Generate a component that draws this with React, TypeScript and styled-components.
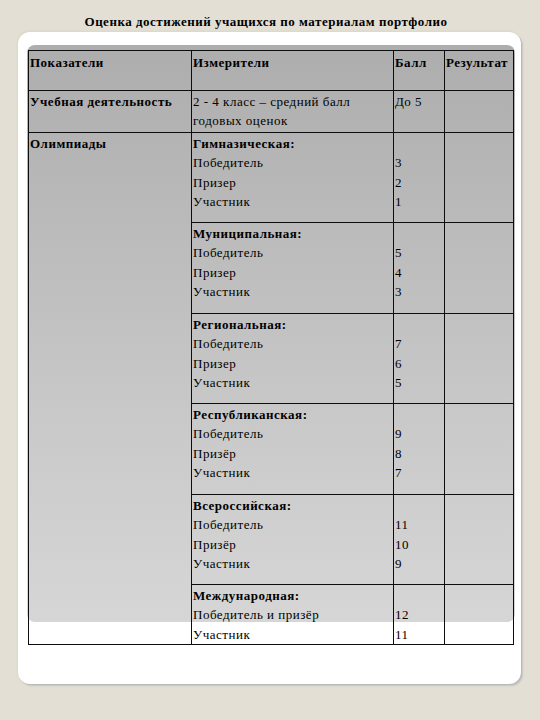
import React from "react";
import styled, { createGlobalStyle } from "styled-components";

const Global = createGlobalStyle`
  html, body { margin: 0; padding: 0; background: #e3dfd5; }
  body {
    width: 540px;
    height: 720px;
    overflow: hidden;
    font-family: "Liberation Serif", "Times New Roman", serif;
    color: #000;
  }
`;

const Page = styled.div`
  display: flex;
  flex-direction: column;
  padding-top: 14px;
`;

const Title = styled.h1`
  margin: 0 0 2px 0;
  font-size: 13px;
  line-height: 16px;
  font-weight: bold;
  letter-spacing: 0.5px;
  text-align: center;
  padding-right: 8px;
`;

const Card = styled.div`
  margin-left: 18px;
  width: 503px;
  height: 652px;
  box-sizing: border-box;
  padding: 13px 0 0 9px;
  background: #fff;
  border-radius: 12px;
  box-shadow: 1px 1px 0 #b9b9b9, 2px 2px 2px rgba(0, 0, 0, 0.12),
    -1px -1px 2px rgba(190, 200, 150, 0.25);
`;

const Panel = styled.div`
  width: 488px;
  height: 577px;
  border-radius: 8px;
  background: linear-gradient(180deg, #adadad 0%, #bcbcbc 35%, #cbcbcb 70%, #d6d6d6 100%);
  padding: 5px 0 0 1px;
  box-sizing: border-box;
`;

const Table = styled.table`
  width: 485px;
  border-collapse: collapse;
  table-layout: fixed;
  font-size: 13px;
  letter-spacing: 0.5px;
`;

const Col = styled.col<{ $w: number }>`
  width: ${(p) => p.$w}px;
`;

const Row = styled.tr<{ $h: number }>`
  height: ${(p) => p.$h}px;
`;

const Cell = styled.td<{ $head?: boolean }>`
  border: 1px solid #0d0d0d;
  vertical-align: top;
  padding: ${(p) => (p.$head ? "4px" : "1px")} 1px 0 1px;
  font-weight: ${(p) => (p.$head ? "bold" : "normal")};
  overflow: hidden;
`;

const Line = styled.div<{ $bold?: boolean }>`
  line-height: 19.3px;
  height: 19.3px;
  white-space: nowrap;
  font-weight: ${(p) => (p.$bold ? "bold" : "normal")};
`;

type Group = { name: string; items: [string, string][]; h: number };

const groups: Group[] = [
  { name: "Гимназическая:", items: [["Победитель", "3"], ["Призер", "2"], ["Участник", "1"]], h: 90 },
  { name: "Муниципальная:", items: [["Победитель", "5"], ["Призер", "4"], ["Участник", "3"]], h: 91 },
  { name: "Региональная:", items: [["Победитель", "7"], ["Призер", "6"], ["Участник", "5"]], h: 90 },
  { name: "Республиканская:", items: [["Победитель", "9"], ["Призёр", "8"], ["Участник", "7"]], h: 91 },
  { name: "Всероссийская:", items: [["Победитель", "11"], ["Призёр", "10"], ["Участник", "9"]], h: 90 },
  { name: "Международная:", items: [["Победитель и призёр", "12"], ["Участник", "11"]], h: 59 },
];

export default function App() {
  return (
    <>
      <Global />
      <Page>
        <Title>Оценка достижений учащихся по материалам портфолио</Title>
        <Card>
          <Panel>
            <Table>
              <colgroup>
                <Col $w={163} />
                <Col $w={202} />
                <Col $w={51} />
                <Col $w={69} />
              </colgroup>
              <tbody>
                <Row $h={40}>
                  <Cell $head>Показатели</Cell>
                  <Cell $head>Измерители</Cell>
                  <Cell $head>Балл</Cell>
                  <Cell $head>Результат</Cell>
                </Row>
                <Row $h={42}>
                  <Cell>
                    <Line $bold>Учебная деятельность</Line>
                  </Cell>
                  <Cell>
                    <Line>2 - 4 класс – средний балл</Line>
                    <Line>годовых оценок</Line>
                  </Cell>
                  <Cell>
                    <Line>До 5</Line>
                  </Cell>
                  <Cell />
                </Row>
                {groups.map((g, i) => (
                  <Row $h={g.h} key={g.name}>
                    {i === 0 && (
                      <Cell rowSpan={groups.length}>
                        <Line $bold>Олимпиады</Line>
                      </Cell>
                    )}
                    <Cell>
                      <Line $bold>{g.name}</Line>
                      {g.items.map(([label]) => (
                        <Line key={label}>{label}</Line>
                      ))}
                    </Cell>
                    <Cell>
                      <Line />
                      {g.items.map(([label, score]) => (
                        <Line key={label}>{score}</Line>
                      ))}
                    </Cell>
                    <Cell />
                  </Row>
                ))}
              </tbody>
            </Table>
          </Panel>
        </Card>
      </Page>
    </>
  );
}
